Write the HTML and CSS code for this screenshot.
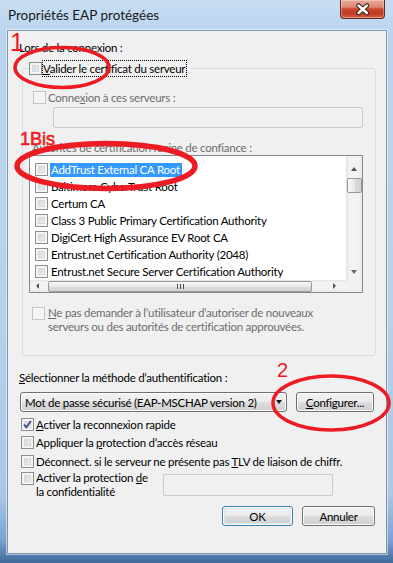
FILE: index.html
```html
<!DOCTYPE html>
<html lang="fr">
<head>
  <meta charset="UTF-8">
  <meta name="viewport" content="width=device-width, initial-scale=1.0">
  <title>Propriétés EAP protégées</title>
  <link rel="stylesheet" href="styles.css">
</head>
<body>
  <div class="window">
    <div class="titlebar">
      <span class="title">Propriétés EAP protégées</span>
      <span class="close">
        <svg width="43" height="18" viewBox="0 0 43 18">
          <path d="M17.5 5.5 L26 13 M26 5.5 L17.5 13" stroke="#3a2521" stroke-width="4.6" stroke-linecap="round" fill="none"/>
          <path d="M17.5 5.5 L26 13 M26 5.5 L17.5 13" stroke="#fff" stroke-width="2.4" stroke-linecap="round" fill="none"/>
        </svg>
      </span>
    </div>

    <div class="client">
      <div class="caption connect-caption">Lors de la connexion :</div>

      <fieldset class="group">
        <legend><span class="cb"></span><span class="focus"><u>V</u>alider le certificat du serveur</span></legend>

        <div class="row servers disabled"><span class="cb off"></span><span>Conne<u>x</u>ion à ces serveurs :</span></div>
        <div class="textbox servers-box"></div>

        <div class="list-caption disabled">Autorités de certification racine de confiance :</div>
        <div class="listbox">
          <ul class="items">
            <li class="selected"><span class="cb"></span><span class="name">AddTrust External CA Root</span></li>
            <li><span class="cb"></span><span class="name">Baltimore CyberTrust Root</span></li>
            <li><span class="cb"></span><span class="name">Certum CA</span></li>
            <li><span class="cb"></span><span class="name">Class 3 Public Primary Certification Authority</span></li>
            <li><span class="cb"></span><span class="name">DigiCert High Assurance EV Root CA</span></li>
            <li><span class="cb"></span><span class="name">Entrust.net Certification Authority (2048)</span></li>
            <li><span class="cb"></span><span class="name">Entrust.net Secure Server Certification Authority</span></li>
          </ul>
          <div class="vscroll">
            <span class="sb-btn up"><span class="tri-up"></span></span>
            <span class="thumb-v"></span>
            <span class="sb-fill"></span>
            <span class="sb-btn down"><span class="tri-down"></span></span>
          </div>
          <div class="hscroll">
            <span class="sb-btn left"><span class="tri-left"></span></span>
            <span class="thumb-h"><span class="grip"></span></span>
            <span class="sb-fill"></span>
            <span class="sb-btn right"><span class="tri-right"></span></span>
          </div>
          <div class="corner"></div>
        </div>

        <div class="row multi prompt disabled">
          <span class="cb off"></span>
          <span><u>N</u>e pas demander à l’utilisateur d’autoriser de nouveaux<br>serveurs ou des autorités de certification approuvées.</span>
        </div>
      </fieldset>

      <div class="caption method-caption"><u>S</u>électionner la méthode d’authentification :</div>
      <div class="method">
        <div class="combo"><span>Mot de passe sécurisé (EAP-MSCHAP version 2)</span><span class="tri-down dark"></span></div>
        <button class="btn configure"><u>C</u>onfigurer...</button>
      </div>

      <div class="options">
        <div class="row opt opt-fast"><span class="cb checked"><svg width="11" height="11" viewBox="0 0 11 11"><path d="M2 5.5 L4.3 8.2 L9 2" stroke="#3e5289" stroke-width="1.9" fill="none"/></svg></span><span><u>A</u>ctiver la reconnexion rapide</span></div>
        <div class="row opt opt-nap"><span class="cb"></span><span>Appliquer la <u>p</u>rotection d’accès réseau</span></div>
        <div class="row opt opt-tlv"><span class="cb"></span><span>Déconnect. si le serveur ne présente pas <u>T</u>LV de liaison de chiffr.</span></div>
        <div class="opt privacy">
          <div class="row multi privacy-label"><span class="cb"></span><span>Activer la protection <u>d</u>e<br>la confidentialité</span></div>
          <div class="textbox privacy-box"></div>
        </div>
      </div>

      <div class="buttons">
        <button class="btn ok">OK</button>
        <button class="btn cancel">Annuler</button>
      </div>
    </div>

    <svg class="marks" width="393" height="563" viewBox="0 0 393 563">
      <g fill="none" stroke="#ed1c24">
        <ellipse cx="62" cy="67.5" rx="47" ry="20" stroke-width="3.5"/>
        <ellipse cx="106" cy="166" rx="89" ry="22.5" stroke-width="5.5"/>
        <ellipse cx="331" cy="403" rx="58" ry="27" stroke-width="3.5"/>
      </g>
      <g fill="#ed1c24" font-family="Liberation Sans, Arial, sans-serif">
        <text x="10" y="51" font-size="25">1</text>
        <text x="20" y="145" font-size="18" stroke="#ed1c24" stroke-width="0.6">1Bis</text>
        <text x="277" y="377" font-size="20">2</text>
      </g>
    </svg>
  </div>
</body>
</html>
```

FILE: styles.css
```css
body {
  margin: 0;
  font-family: "Segoe UI", Lato, "Liberation Sans", sans-serif;
  font-size: 11.5px;
  letter-spacing: -0.25px;
  color: #000;
}
.window {
  position: relative;
  width: 393px;
  height: 563px;
  box-sizing: border-box;
  padding: 0 6px 0 7px;
  background: linear-gradient(180deg, #c7ddf3 0, #bbd4ee 6%, #b8d1ec 55%, #a9c7e7 88%, #7aa2cf 96%, #40699b 100%);
}
.titlebar {
  display: flex;
  height: 30px;
}
.title {
  margin: 8px 0 0 1px;
  line-height: 14px;
  font-size: 13.5px;
  letter-spacing: 0;
  color: #1a1a1a;
}
.close {
  margin-left: auto;
  margin-right: 2px;
  width: 45px;
  height: 19px;
  box-sizing: border-box;
  border: 1px solid #5e2c24;
  border-top: 0;
  border-radius: 0 0 4px 4px;
  background: linear-gradient(180deg, #e9ab9b 0, #df8772 40%, #c9452c 50%, #c23b22 78%, #d8694e 100%);
  box-shadow: inset 0 0 0 1px rgba(255, 255, 255, 0.3);
}
.close svg {
  display: block;
}
.client {
  height: 524px;
  box-sizing: border-box;
  border: 1px solid #8294aa;
  background: #f0f0f0;
  box-shadow: 0 0 0 1px rgba(255, 255, 255, 0.5);
}
.caption {
  line-height: 15px;
  padding-left: 11px;
}
.connect-caption {
  margin-top: 9px;
}
.disabled {
  color: #6d6d6d;
}

/* checkboxes */
.cb {
  flex: none;
  display: block;
  width: 13px;
  height: 13px;
  box-sizing: border-box;
  border: 1px solid #8e8f8f;
  background: linear-gradient(135deg, #cbcfd5, #f7f7f7);
  box-shadow: inset 0 0 0 2px #f4f4f4, inset 0 0 0 3px #d6d9dd;
}
.cb.off {
  border-color: #c4c4c4;
  background: #f4f4f4;
  box-shadow: inset 0 0 0 1px #f8f8f8;
}
.cb.checked svg {
  display: block;
  margin: 0;
}
.row {
  display: flex;
  align-items: center;
  line-height: 15px;
}
.row .cb {
  margin-right: 2px;
}
.row.multi {
  align-items: flex-start;
  line-height: 14px;
}
.row.multi .cb {
  margin-top: 1px;
}

/* group box */
.group {
  margin: 5px 10px 0 14px;
  padding: 0 12px 21px 6px;
  border: 1px solid #d5dfe5;
  border-radius: 3px;
  min-width: 0;
}
.group legend {
  display: flex;
  align-items: center;
  height: 17px;
  padding: 0 3px 0 0;
}
.focus {
  border: 1px dotted #000;
  padding: 0 1px 0 0;
  line-height: 15px;
}
.servers {
  margin: 13px 0 0 4px;
}
.textbox {
  box-sizing: border-box;
  border: 1px solid #c6cbcf;
  border-radius: 2px;
  background: #f0f0f0;
}
.servers-box {
  margin: 2px 0 0 24px;
  height: 21px;
}
.list-caption {
  margin: 13px 0 0 3px;
  line-height: 14px;
}

/* list */
.listbox {
  height: 138px;
  box-sizing: border-box;
  border: 1px solid #828790;
  background: #fff;
  display: grid;
  grid-template-columns: 1fr 16px;
  grid-template-rows: 1fr 12px;
}
.items {
  list-style: none;
  margin: 0;
  padding: 5px 0 0;
  overflow: hidden;
}
.items li {
  display: flex;
  align-items: center;
  height: 17px;
  padding-left: 5px;
  white-space: nowrap;
}
.items .name {
  margin-left: 2px;
  padding: 0 2px 0 1px;
  line-height: 14px;
}
.items .selected .name {
  background: #3399ff;
  color: #fff;
}
.vscroll {
  display: flex;
  flex-direction: column;
  align-items: center;
  background: linear-gradient(90deg, #e4e4e4, #f3f3f3 25%, #f3f3f3 75%, #e9e9e9);
}
.hscroll {
  display: flex;
  align-items: center;
  background: linear-gradient(180deg, #e4e4e4, #f3f3f3 25%, #f3f3f3 75%, #e9e9e9);
}
.corner {
  background: #f0f0f0;
}
.sb-btn {
  display: flex;
  align-items: center;
  justify-content: center;
  flex: none;
}
.sb-btn.up {
  height: 21px;
  width: 16px;
  padding-top: 4px;
  box-sizing: border-box;
}
.sb-btn.down {
  height: 17px;
  width: 16px;
}
.sb-btn.left {
  width: 14px;
  height: 12px;
}
.sb-btn.right {
  width: 16px;
  height: 12px;
  justify-content: flex-start;
  padding-left: 3px;
  box-sizing: border-box;
}
.sb-fill {
  flex: 1;
}
.tri-up {
  width: 0;
  height: 0;
  border-left: 3.5px solid transparent;
  border-right: 3.5px solid transparent;
  border-bottom: 4px solid #555;
}
.tri-down {
  width: 0;
  height: 0;
  border-left: 3.5px solid transparent;
  border-right: 3.5px solid transparent;
  border-top: 4px solid #666;
}
.tri-down.dark {
  border-top-color: #111;
}
.tri-left {
  width: 0;
  height: 0;
  border-top: 3px solid transparent;
  border-bottom: 3px solid transparent;
  border-right: 3.5px solid #555;
}
.tri-right {
  width: 0;
  height: 0;
  border-top: 3px solid transparent;
  border-bottom: 3px solid transparent;
  border-left: 3.5px solid #555;
}
.thumb-v {
  flex: none;
  width: 15px;
  height: 15px;
  margin-top: 1px;
  box-sizing: border-box;
  border: 1px solid #999;
  border-radius: 2px;
  background: linear-gradient(90deg, #f7f7f7, #e9e9e9 50%, #dadada 51%, #d4d4d4);
}
.thumb-h {
  flex: none;
  display: flex;
  align-items: center;
  justify-content: center;
  width: 264px;
  height: 11px;
  margin-left: 4px;
  box-sizing: border-box;
  border: 1px solid #999;
  border-radius: 2px;
  background: linear-gradient(180deg, #f7f7f7, #e9e9e9 50%, #dadada 51%, #d4d4d4);
}
.grip {
  width: 7px;
  height: 5px;
  background: repeating-linear-gradient(90deg, #4a4a4a 0 1px, transparent 1px 3px);
}
.prompt {
  margin: 13px 0 0 3px;
}
.prompt .cb {
  margin-right: 3px;
}

/* bottom part */
.method-caption {
  margin-top: 14px;
}
.method {
  display: flex;
  gap: 9px;
  margin: 7px 0 0 12px;
}
.combo {
  width: 267px;
  height: 20px;
  box-sizing: border-box;
  display: flex;
  align-items: center;
  justify-content: space-between;
  padding: 0 4px;
  border: 1px solid #707070;
  border-radius: 3px;
  white-space: nowrap;
  background: linear-gradient(180deg, #f2f2f2 0, #ebebeb 50%, #dddddd 50%, #cfcfcf 100%);
  box-shadow: inset 0 0 0 1px #fbfbfb;
}
.btn {
  height: 20px;
  box-sizing: border-box;
  padding: 0;
  font: inherit;
  letter-spacing: inherit;
  color: #000;
  border: 1px solid #707070;
  border-radius: 3px;
  background: linear-gradient(180deg, #f2f2f2 0, #ebebeb 50%, #dddddd 50%, #cfcfcf 100%);
  box-shadow: inset 0 0 0 1px #fbfbfb;
}
.configure {
  width: 78px;
}
.options {
  padding-left: 13px;
}
.opt-fast {
  margin-top: 5px;
}
.opt-nap {
  margin-top: 3px;
}
.opt-tlv {
  margin-top: 4px;
}
.privacy {
  display: flex;
  align-items: center;
  margin-top: 2px;
}
.privacy-label {
  width: 142px;
}
.privacy-box {
  width: 170px;
  height: 22px;
}
.buttons {
  display: flex;
  justify-content: flex-end;
  gap: 9px;
  margin-top: 7px;
  padding-right: 11px;
}
.ok {
  width: 71px;
  border-color: #3c7fb1;
  box-shadow: inset 0 0 0 1px #fcfcfc, inset 0 0 1px 2px #cde9f8;
}
.cancel {
  width: 73px;
}
.marks {
  position: absolute;
  left: 0;
  top: 0;
  letter-spacing: 0;
  pointer-events: none;
}
```
